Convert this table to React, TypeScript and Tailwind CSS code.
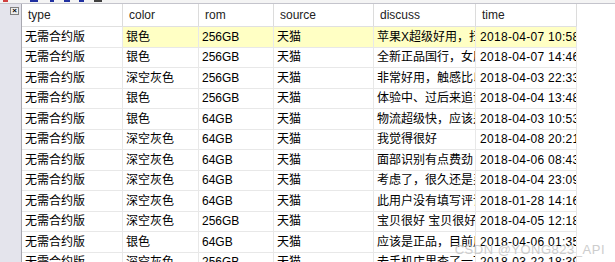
import React from "react";

const rows = [
  ["无需合约版", "银色", "256GB", "天猫", "苹果X超级好用，扫脸很快", "2018-04-07 10:58:12"],
  ["无需合约版", "银色", "256GB", "天猫", "全新正品国行，女朋友很喜欢", "2018-04-07 14:46:30"],
  ["无需合约版", "深空灰色", "256GB", "天猫", "非常好用，触感比以前好", "2018-04-03 22:33:05"],
  ["无需合约版", "银色", "256GB", "天猫", "体验中、过后来追评", "2018-04-04 13:48:51"],
  ["无需合约版", "银色", "64GB", "天猫", "物流超级快，应该是正品", "2018-04-03 10:53:17"],
  ["无需合约版", "深空灰色", "64GB", "天猫", "我觉得很好", "2018-04-08 20:21:44"],
  ["无需合约版", "深空灰色", "64GB", "天猫", "面部识别有点费劲", "2018-04-06 08:43:09"],
  ["无需合约版", "深空灰色", "64GB", "天猫", "考虑了，很久还是买了", "2018-04-04 23:09:38"],
  ["无需合约版", "深空灰色", "64GB", "天猫", "此用户没有填写评论!", "2018-01-28 14:16:02"],
  ["无需合约版", "深空灰色", "256GB", "天猫", "宝贝很好  宝贝很好", "2018-04-05 12:18:27"],
  ["无需合约版", "银色", "64GB", "天猫", "应该是正品，目前用着不错", "2018-04-06 01:35:55"],
  ["无需合约版", "深空灰色", "256GB", "天猫", "去手机店里查了一下", "2018-03-22 18:39:14"],
];

const headers = ["type", "color", "rom", "source", "discuss", "time"];
const widths = ["w-[101px]", "w-[76px]", "w-[75px]", "w-[100px]", "w-[102px]", "w-[101px]"];

export default function App() {
  return (
    <div
      className="relative w-[615px] h-[262px] overflow-hidden bg-white text-[12px] text-black"
      style={{ fontFamily: '"Liberation Sans", "Noto Sans CJK SC", sans-serif' }}
    >
      {/* cut-off strip above the grid */}
      <div className="h-[4px] flex items-start border-b border-[#c4c4cc] bg-[#f4f4f4]">
        <div className="ml-[3px] w-[5px] h-[2px] bg-[#d04040]" />
        <div className="ml-[22px] w-[8px] h-[2px] bg-[#2030a0]" />
        <div className="ml-[12px] w-[4px] h-[2px] bg-[#2030a0]" />
        <div className="ml-[10px] w-[6px] h-[2px] bg-[#2030a0]" />
        <div className="ml-[9px] w-[5px] h-[2px] bg-[#2030a0]" />
        <div className="ml-[10px] w-[8px] h-[2px] bg-[#404040]" />
      </div>

      <div className="flex">
        {/* row header gutter */}
        <div className="w-[22px] shrink-0 h-[260px] bg-[#e4e4ec] border-r border-[#a8a8b0] pt-[3px] pl-[10px]">
          <div className="w-[9px] h-[8px] border border-[#808080] bg-[#eeeeee] flex items-center justify-center text-[8px] font-bold leading-none text-black">
            ×
          </div>
        </div>

        <div className="flex flex-col">
          <div className="flex h-[23px] border-b border-[#e0e0e0]">
            {headers.map((h, i) => (
              <div
                key={h}
                className={`${widths[i]} shrink-0 border-r border-[#dcdcdc] pl-[6px] flex items-center text-[#222]`}
              >
                {h}
              </div>
            ))}
          </div>
          {rows.map((r, ri) => (
            <div key={ri} className="flex h-[20.5px] border-b border-[#e8e8e8]">
              {r.map((c, ci) => (
                <div
                  key={ci}
                  className={`${widths[ci]} shrink-0 border-r border-[#e8e8e8] flex items-center overflow-hidden whitespace-nowrap ${
                    ci === 5 ? "pl-[4px] tracking-[0.3px]" : "pl-[3px]"
                  } ${ri === 0 && ci > 0 ? "bg-[#ffffc4]" : ""}`}
                >
                  {c}
                </div>
              ))}
            </div>
          ))}
        </div>
      </div>

      <div className="absolute right-[10px] bottom-[3px] text-[13px] text-[#c8c8c8] opacity-90 tracking-[0.5px]">
        CSDN @YONG823_API
      </div>
    </div>
  );
}
